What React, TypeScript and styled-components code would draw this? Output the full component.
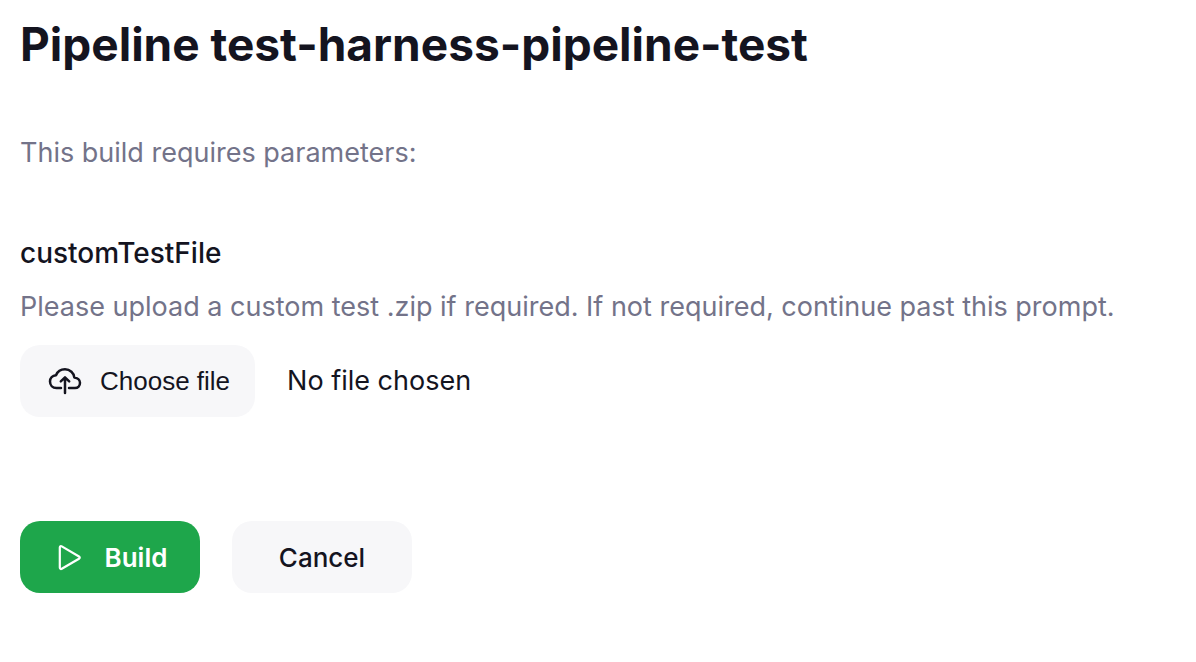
import React, { useRef, useState } from "react";
import styled, { createGlobalStyle } from "styled-components";

const GlobalStyle = createGlobalStyle`
  *, *::before, *::after { box-sizing: border-box; }
  body { margin: 0; background: #ffffff; color: #14141f; font-family: Inter, "Liberation Sans", sans-serif; }
`;

const Page = styled.main`
  padding: 15px 20px 68px;
`;

const Title = styled.h1`
  margin: 0 0 64px;
  font-size: 46px;
  font-weight: 700;
  line-height: 58px;
`;

const Text = styled.p`
  margin: 0;
  font-size: 27px;
  line-height: 32px;
  color: #737389;
`;

const Field = styled.section`
  display: flex;
  flex-direction: column;
  gap: 22px;
  margin: 68px 0 104px;
`;

const Label = styled.label`
  font-size: 28px;
  font-weight: 500;
  line-height: 32px;
`;

const Row = styled.div`
  display: flex;
  align-items: center;
  gap: 32px;
`;

const HiddenFile = styled.input`
  display: none;
`;

const Button = styled.button`
  display: inline-flex;
  align-items: center;
  justify-content: center;
  min-width: 180px;
  height: 72px;
  padding: 0 28px;
  border: 0;
  border-radius: 20px;
  background: #f7f7f9;
  color: #14141f;
  font-family: inherit;
  font-size: 26px;
  font-weight: 500;
  cursor: pointer;
`;

const FileButton = styled(Button)`
  gap: 18px;
  padding-right: 25px;
  font-family: "Liberation Sans", sans-serif;
  font-weight: 400;
`;

const PrimaryButton = styled(Button)`
  gap: 22px;
  padding-left: 32px;
  background: #1ea64b;
  color: #ffffff;
  font-weight: 600;
`;

const FileName = styled.span`
  font-size: 27px;
  line-height: 32px;
`;

const CloudIcon = () => (
  <svg width="34" height="34" viewBox="0 0 34 34" fill="none" stroke="currentColor" strokeWidth="2.5" strokeLinecap="round" strokeLinejoin="round" aria-hidden="true">
    <path d="M13 24H8.500C4.500 24 2 21 2 17.500C2 14 4.500 11.500 8 11.200C9.500 7.500 13 5.300 17 5.300C22 5.300 26 9 26.300 13.500C29.500 13.800 32 16 32 18.800C32 21.800 30 24 27 24H21" />
    <path d="M17 29V13.500M12.800 17.400L17 13.400L21.200 17.400" />
  </svg>
);

const PlayIcon = () => (
  <svg width="26" height="28" viewBox="0 0 26 28" fill="none" stroke="currentColor" strokeWidth="2.2" strokeLinejoin="round" aria-hidden="true">
    <path d="M2.800 4.600c0-1.300 1-1.800 2-1.200L22 13.500c1 .6 1 1.600 0 2.200L4.800 25.800c-1 .6-2 .1-2-1.200Z" />
  </svg>
);

export default function App() {
  const input = useRef<HTMLInputElement>(null);
  const [name, setName] = useState("No file chosen");
  return (
    <>
      <GlobalStyle />
      <Page>
        <Title>Pipeline test-harness-pipeline-test</Title>
        <Text>This build requires parameters:</Text>
        <Field>
          <Label htmlFor="customTestFile">customTestFile</Label>
          <Text>Please upload a custom test .zip if required. If not required, continue past this prompt.</Text>
          <Row>
            <HiddenFile ref={input} id="customTestFile" type="file" onChange={(e) => setName(e.target.files?.[0]?.name ?? "No file chosen")} />
            <FileButton type="button" onClick={() => input.current?.click()}>
              <CloudIcon />
              Choose file
            </FileButton>
            <FileName>{name}</FileName>
          </Row>
        </Field>
        <Row>
          <PrimaryButton type="submit">
            <PlayIcon />
            Build
          </PrimaryButton>
          <Button type="button">Cancel</Button>
        </Row>
      </Page>
    </>
  );
}
